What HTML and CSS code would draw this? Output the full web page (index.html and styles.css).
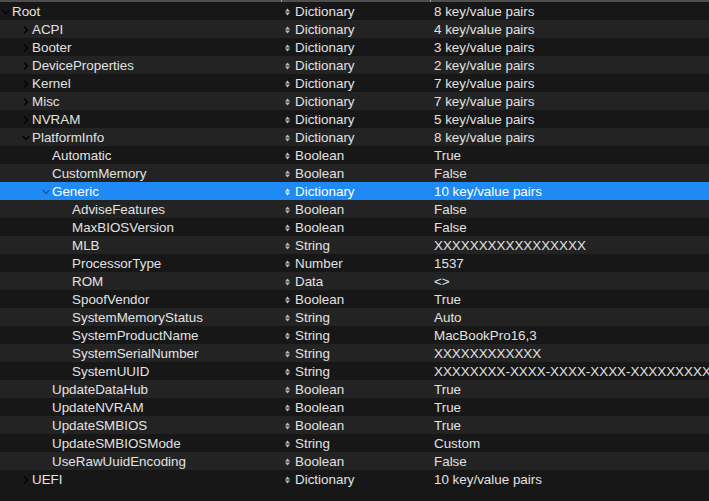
FILE: index.html
```html
<!DOCTYPE html>
<html>
<head>
<meta charset="utf-8">
<link rel="stylesheet" href="styles.css">
</head>
<body>
<div class="outline">
  <div class="topline"><span class="tick t1"></span><span class="tick t2"></span></div>
  <div class="rows">
    <div class="row"><div class="key l0"><span class="disc open"><svg viewBox="0 0 8 8"><path d="M1 2.5 L4 5.5 L7 2.5"/></svg></span>Root</div><div class="type"><svg class="ud" viewBox="0 0 5 8"><path d="M0 3.4 L2.5 0.6 L5 3.4Z M0 4.6 L2.5 7.4 L5 4.6Z"/></svg>Dictionary</div><div class="val">8 key/value pairs</div></div>
    <div class="row"><div class="key l1"><span class="disc"><svg viewBox="0 0 8 8"><path d="M2.5 1 L5.5 4 L2.5 7"/></svg></span>ACPI</div><div class="type"><svg class="ud" viewBox="0 0 5 8"><path d="M0 3.4 L2.5 0.6 L5 3.4Z M0 4.6 L2.5 7.4 L5 4.6Z"/></svg>Dictionary</div><div class="val">4 key/value pairs</div></div>
    <div class="row"><div class="key l1"><span class="disc"><svg viewBox="0 0 8 8"><path d="M2.5 1 L5.5 4 L2.5 7"/></svg></span>Booter</div><div class="type"><svg class="ud" viewBox="0 0 5 8"><path d="M0 3.4 L2.5 0.6 L5 3.4Z M0 4.6 L2.5 7.4 L5 4.6Z"/></svg>Dictionary</div><div class="val">3 key/value pairs</div></div>
    <div class="row"><div class="key l1"><span class="disc"><svg viewBox="0 0 8 8"><path d="M2.5 1 L5.5 4 L2.5 7"/></svg></span>DeviceProperties</div><div class="type"><svg class="ud" viewBox="0 0 5 8"><path d="M0 3.4 L2.5 0.6 L5 3.4Z M0 4.6 L2.5 7.4 L5 4.6Z"/></svg>Dictionary</div><div class="val">2 key/value pairs</div></div>
    <div class="row"><div class="key l1"><span class="disc"><svg viewBox="0 0 8 8"><path d="M2.5 1 L5.5 4 L2.5 7"/></svg></span>Kernel</div><div class="type"><svg class="ud" viewBox="0 0 5 8"><path d="M0 3.4 L2.5 0.6 L5 3.4Z M0 4.6 L2.5 7.4 L5 4.6Z"/></svg>Dictionary</div><div class="val">7 key/value pairs</div></div>
    <div class="row"><div class="key l1"><span class="disc"><svg viewBox="0 0 8 8"><path d="M2.5 1 L5.5 4 L2.5 7"/></svg></span>Misc</div><div class="type"><svg class="ud" viewBox="0 0 5 8"><path d="M0 3.4 L2.5 0.6 L5 3.4Z M0 4.6 L2.5 7.4 L5 4.6Z"/></svg>Dictionary</div><div class="val">7 key/value pairs</div></div>
    <div class="row"><div class="key l1"><span class="disc"><svg viewBox="0 0 8 8"><path d="M2.5 1 L5.5 4 L2.5 7"/></svg></span>NVRAM</div><div class="type"><svg class="ud" viewBox="0 0 5 8"><path d="M0 3.4 L2.5 0.6 L5 3.4Z M0 4.6 L2.5 7.4 L5 4.6Z"/></svg>Dictionary</div><div class="val">5 key/value pairs</div></div>
    <div class="row"><div class="key l1"><span class="disc open"><svg viewBox="0 0 8 8"><path d="M1 2.5 L4 5.5 L7 2.5"/></svg></span>PlatformInfo</div><div class="type"><svg class="ud" viewBox="0 0 5 8"><path d="M0 3.4 L2.5 0.6 L5 3.4Z M0 4.6 L2.5 7.4 L5 4.6Z"/></svg>Dictionary</div><div class="val">8 key/value pairs</div></div>
    <div class="row"><div class="key l2"><span class="disc"></span>Automatic</div><div class="type"><svg class="ud" viewBox="0 0 5 8"><path d="M0 3.4 L2.5 0.6 L5 3.4Z M0 4.6 L2.5 7.4 L5 4.6Z"/></svg>Boolean</div><div class="val">True</div></div>
    <div class="row"><div class="key l2"><span class="disc"></span>CustomMemory</div><div class="type"><svg class="ud" viewBox="0 0 5 8"><path d="M0 3.4 L2.5 0.6 L5 3.4Z M0 4.6 L2.5 7.4 L5 4.6Z"/></svg>Boolean</div><div class="val">False</div></div>
    <div class="row sel"><div class="key l2"><span class="disc open"><svg viewBox="0 0 8 8"><path d="M1 2.5 L4 5.5 L7 2.5"/></svg></span>Generic</div><div class="type"><svg class="ud" viewBox="0 0 5 8"><path d="M0 3.4 L2.5 0.6 L5 3.4Z M0 4.6 L2.5 7.4 L5 4.6Z"/></svg>Dictionary</div><div class="val">10 key/value pairs</div></div>
    <div class="row"><div class="key l3"><span class="disc"></span>AdviseFeatures</div><div class="type"><svg class="ud" viewBox="0 0 5 8"><path d="M0 3.4 L2.5 0.6 L5 3.4Z M0 4.6 L2.5 7.4 L5 4.6Z"/></svg>Boolean</div><div class="val">False</div></div>
    <div class="row"><div class="key l3"><span class="disc"></span>MaxBIOSVersion</div><div class="type"><svg class="ud" viewBox="0 0 5 8"><path d="M0 3.4 L2.5 0.6 L5 3.4Z M0 4.6 L2.5 7.4 L5 4.6Z"/></svg>Boolean</div><div class="val">False</div></div>
    <div class="row"><div class="key l3"><span class="disc"></span>MLB</div><div class="type"><svg class="ud" viewBox="0 0 5 8"><path d="M0 3.4 L2.5 0.6 L5 3.4Z M0 4.6 L2.5 7.4 L5 4.6Z"/></svg>String</div><div class="val">XXXXXXXXXXXXXXXXX</div></div>
    <div class="row"><div class="key l3"><span class="disc"></span>ProcessorType</div><div class="type"><svg class="ud" viewBox="0 0 5 8"><path d="M0 3.4 L2.5 0.6 L5 3.4Z M0 4.6 L2.5 7.4 L5 4.6Z"/></svg>Number</div><div class="val">1537</div></div>
    <div class="row"><div class="key l3"><span class="disc"></span>ROM</div><div class="type"><svg class="ud" viewBox="0 0 5 8"><path d="M0 3.4 L2.5 0.6 L5 3.4Z M0 4.6 L2.5 7.4 L5 4.6Z"/></svg>Data</div><div class="val">&lt;&gt;</div></div>
    <div class="row"><div class="key l3"><span class="disc"></span>SpoofVendor</div><div class="type"><svg class="ud" viewBox="0 0 5 8"><path d="M0 3.4 L2.5 0.6 L5 3.4Z M0 4.6 L2.5 7.4 L5 4.6Z"/></svg>Boolean</div><div class="val">True</div></div>
    <div class="row"><div class="key l3"><span class="disc"></span>SystemMemoryStatus</div><div class="type"><svg class="ud" viewBox="0 0 5 8"><path d="M0 3.4 L2.5 0.6 L5 3.4Z M0 4.6 L2.5 7.4 L5 4.6Z"/></svg>String</div><div class="val">Auto</div></div>
    <div class="row"><div class="key l3"><span class="disc"></span>SystemProductName</div><div class="type"><svg class="ud" viewBox="0 0 5 8"><path d="M0 3.4 L2.5 0.6 L5 3.4Z M0 4.6 L2.5 7.4 L5 4.6Z"/></svg>String</div><div class="val">MacBookPro16,3</div></div>
    <div class="row"><div class="key l3"><span class="disc"></span>SystemSerialNumber</div><div class="type"><svg class="ud" viewBox="0 0 5 8"><path d="M0 3.4 L2.5 0.6 L5 3.4Z M0 4.6 L2.5 7.4 L5 4.6Z"/></svg>String</div><div class="val">XXXXXXXXXXXX</div></div>
    <div class="row"><div class="key l3"><span class="disc"></span>SystemUUID</div><div class="type"><svg class="ud" viewBox="0 0 5 8"><path d="M0 3.4 L2.5 0.6 L5 3.4Z M0 4.6 L2.5 7.4 L5 4.6Z"/></svg>String</div><div class="val">XXXXXXXX-XXXX-XXXX-XXXX-XXXXXXXXXXXX</div></div>
    <div class="row"><div class="key l2"><span class="disc"></span>UpdateDataHub</div><div class="type"><svg class="ud" viewBox="0 0 5 8"><path d="M0 3.4 L2.5 0.6 L5 3.4Z M0 4.6 L2.5 7.4 L5 4.6Z"/></svg>Boolean</div><div class="val">True</div></div>
    <div class="row"><div class="key l2"><span class="disc"></span>UpdateNVRAM</div><div class="type"><svg class="ud" viewBox="0 0 5 8"><path d="M0 3.4 L2.5 0.6 L5 3.4Z M0 4.6 L2.5 7.4 L5 4.6Z"/></svg>Boolean</div><div class="val">True</div></div>
    <div class="row"><div class="key l2"><span class="disc"></span>UpdateSMBIOS</div><div class="type"><svg class="ud" viewBox="0 0 5 8"><path d="M0 3.4 L2.5 0.6 L5 3.4Z M0 4.6 L2.5 7.4 L5 4.6Z"/></svg>Boolean</div><div class="val">True</div></div>
    <div class="row"><div class="key l2"><span class="disc"></span>UpdateSMBIOSMode</div><div class="type"><svg class="ud" viewBox="0 0 5 8"><path d="M0 3.4 L2.5 0.6 L5 3.4Z M0 4.6 L2.5 7.4 L5 4.6Z"/></svg>String</div><div class="val">Custom</div></div>
    <div class="row"><div class="key l2"><span class="disc"></span>UseRawUuidEncoding</div><div class="type"><svg class="ud" viewBox="0 0 5 8"><path d="M0 3.4 L2.5 0.6 L5 3.4Z M0 4.6 L2.5 7.4 L5 4.6Z"/></svg>Boolean</div><div class="val">False</div></div>
    <div class="row"><div class="key l1"><span class="disc"><svg viewBox="0 0 8 8"><path d="M2.5 1 L5.5 4 L2.5 7"/></svg></span>UEFI</div><div class="type"><svg class="ud" viewBox="0 0 5 8"><path d="M0 3.4 L2.5 0.6 L5 3.4Z M0 4.6 L2.5 7.4 L5 4.6Z"/></svg>Dictionary</div><div class="val">10 key/value pairs</div></div>
  </div>
</div>
</body>
</html>
```

FILE: styles.css
```css
html, body {
  margin: 0;
  padding: 0;
  background: #171717;
}
body {
  width: 709px;
  height: 501px;
  overflow: hidden;
  font-family: "Liberation Sans", Arial, sans-serif;
  font-size: 13.4px;
  color: #e2e2e2;
}
.outline {
  display: flex;
  flex-direction: column;
}
.topline {
  height: 2px;
  background: #4e4e4e;
  position: relative;
}
.tick {
  position: absolute;
  top: 0;
  width: 1px;
  height: 2px;
  background: #9a9a9a;
}
.t1 { left: 281px; }
.t2 { left: 430px; }
.rows {
  display: flex;
  flex-direction: column;
}
.row {
  display: grid;
  grid-template-columns: 282px 152px 1fr;
  box-sizing: border-box;
  height: 18px;
  padding-top: 2px;
  line-height: 16px;
  white-space: nowrap;
  overflow: hidden;
}
.row:nth-child(odd) { background: #171717; }
.row:nth-child(even) { background: #232323; }
.row.sel { background: #1f8af3; color: #ffffff; }
.key {
  display: flex;
  align-items: center;
}
.l0 { padding-left: 2px; }
.l1 { padding-left: 22px; }
.l2 { padding-left: 42px; }
.l3 { padding-left: 62px; }
.disc {
  width: 10px;
  height: 16px;
  flex: none;
  display: flex;
  align-items: center;
}
.disc svg {
  width: 8px;
  height: 8px;
  fill: none;
  stroke: #050505;
  stroke-width: 1.5;
  stroke-linecap: round;
  stroke-linejoin: round;
}
.sel .disc svg { stroke: #1858a8; }
.type {
  display: flex;
  align-items: center;
  padding-left: 3px;
}
.ud {
  width: 5px;
  height: 8px;
  margin-right: 5px;
  fill: #bcbcbc;
  flex: none;
}
.sel .ud { fill: #e8f2ff; }
.val {
  overflow: hidden;
}
```
